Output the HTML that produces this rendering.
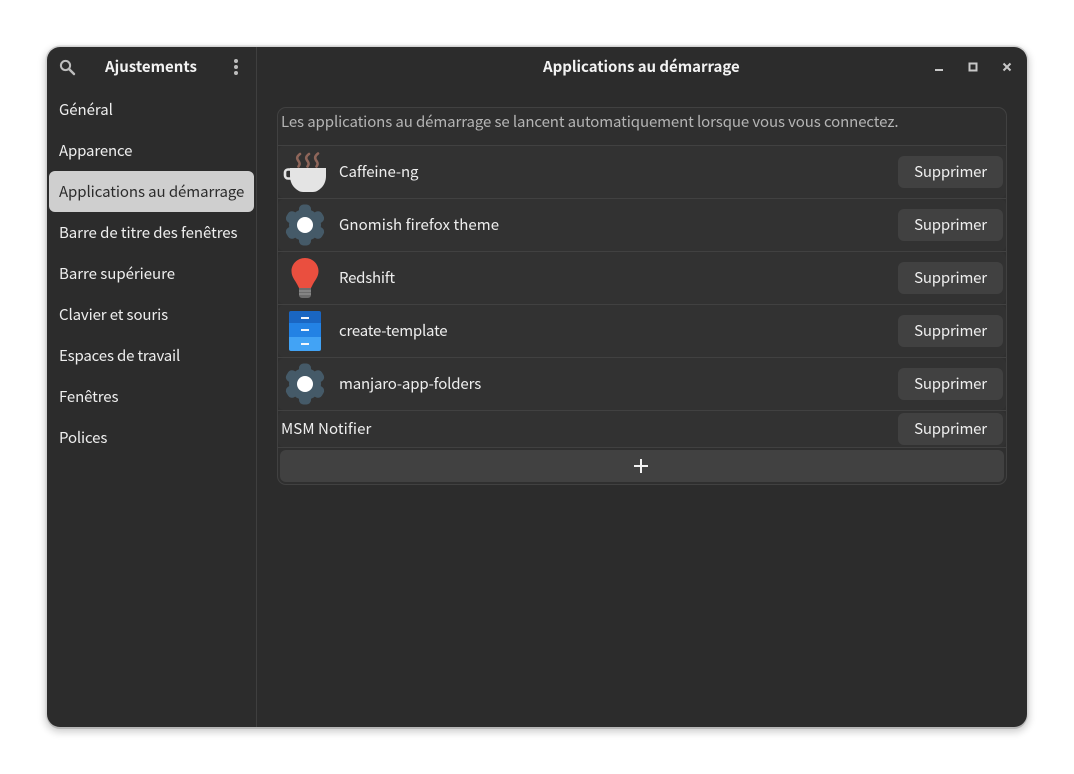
<!DOCTYPE html>
<html><head><meta charset="utf-8">
<style>
*{box-sizing:border-box}
html,body{margin:0;padding:0;width:1074px;height:774px;background:#fff;overflow:hidden;font-family:"Noto Sans CJK SC","Liberation Sans",sans-serif;font-size:15px;color:#eee}
.win{position:absolute;left:47px;top:47px;width:980px;height:680px;background:#2c2c2c;border-radius:13px;box-shadow:0 2px 0 0 #b8b8b8,0 0 0 1.5px #d2d2d2,0 3px 8px 2px rgba(0,0,0,.2)}
.t{position:absolute;white-space:nowrap;line-height:20px}
.abs{position:absolute}
.btn{position:absolute;left:898px;width:105px;height:32px;background:#414141;border-radius:6px;color:#eee;text-align:center;line-height:31px;letter-spacing:-.2px}
.line{position:absolute;left:278px;width:728px;height:1px;background:#414141}
.row{position:absolute;left:278px;width:728px;background:#323232;border-radius:6px}
</style></head><body>
<div class="win"></div>
<div class="abs" style="left:256px;top:47px;width:1px;height:680px;background:#3f3f3f"></div>

<div class="abs" style="left:277px;top:107px;width:730px;height:378px;border:1px solid #414141;border-radius:9px;background:#2f2f2f"></div>
<div class="row" style="top:146px;height:52px"></div>
<div class="row" style="top:199px;height:52px"></div>
<div class="row" style="top:252px;height:52px"></div>
<div class="row" style="top:305px;height:52px"></div>
<div class="row" style="top:358px;height:52px"></div>
<div class="row" style="top:411px;height:36px"></div>
<div class="line" style="top:145px"></div>
<div class="line" style="top:198px"></div>
<div class="line" style="top:251px"></div>
<div class="line" style="top:304px"></div>
<div class="line" style="top:357px"></div>
<div class="line" style="top:410px"></div>
<div class="line" style="top:447px"></div>

<svg class="abs" style="left:59px;top:59px" width="17" height="17" viewBox="0 0 17 17"><circle cx="6.5" cy="6.5" r="4.6" fill="none" stroke="#bdbdbd" stroke-width="2"/><path d="M10 10l5 5" stroke="#bdbdbd" stroke-width="2.4" stroke-linecap="round"/></svg>
<div class="t" style="left:105px;top:57px;font-weight:700;color:#f2f2f2">Ajustements</div>
<svg class="abs" style="left:232px;top:58px" width="8" height="18"><circle cx="4" cy="3" r="2" fill="#bdbdbd"/><circle cx="4" cy="9" r="2" fill="#bdbdbd"/><circle cx="4" cy="15" r="2" fill="#bdbdbd"/></svg>

<div class="abs" style="left:49px;top:171px;width:205px;height:41px;background:#cfcfcf;border-radius:6px"></div>
<div class="t" style="left:59px;top:100px;letter-spacing:-.05px">Général</div>
<div class="t" style="left:59px;top:141px;letter-spacing:-.15px">Apparence</div>
<div class="t" style="left:59px;top:182px;color:#2c2c2c;letter-spacing:-.08px">Applications au démarrage</div>
<div class="t" style="left:59px;top:223px;letter-spacing:-.06px">Barre de titre des fenêtres</div>
<div class="t" style="left:59px;top:264px;letter-spacing:-.03px">Barre supérieure</div>
<div class="t" style="left:59px;top:305px;letter-spacing:-.12px">Clavier et souris</div>
<div class="t" style="left:59px;top:346px;letter-spacing:-.17px">Espaces de travail</div>
<div class="t" style="left:59px;top:387px;letter-spacing:-.12px">Fenêtres</div>
<div class="t" style="left:59px;top:428px;letter-spacing:-.14px">Polices</div>

<div class="t" style="left:543px;top:57px;font-weight:700;color:#f2f2f2;letter-spacing:-.04px">Applications au démarrage</div>
<svg class="abs" style="left:930px;top:58px" width="86" height="18"><rect x="5" y="11" width="8" height="2" fill="#c8c8c8"/><rect x="39.5" y="5.5" width="7" height="7" fill="none" stroke="#c8c8c8" stroke-width="2"/><path d="M73.5 5.5l7 7m0-7l-7 7" stroke="#c8c8c8" stroke-width="2"/></svg>

<div class="t" style="left:281px;top:112px;color:#b4b4b4;letter-spacing:-.105px">Les applications au démarrage se lancent automatiquement lorsque vous vous connectez.</div>

<svg class="abs" style="left:283px;top:150px" width="46" height="44" viewBox="0 0 46 44">
<g fill="none" stroke="#8f665a" stroke-width="2.6" stroke-linecap="round"><path d="M17 4c-4 3-3 5-1.500 7s1.500 3.500 0 5.500"/><path d="M26 4c-4 3-3 5-1.500 7s1.500 3.500 0 5.500"/><path d="M35 3.500c-4 3-3 5.500-1.500 7.500s1.500 3.500 0 5.500"/></g>
<path d="M7 18h36v8c0 5-2 10-6 13-2 1.600-4 3-7 3H20c-3 0-5-1.400-7-3-4-3-6-8-6-13z" fill="#e4e4e4"/>
<path d="M8 19.500H5a3 3 0 0 0-3 3v3a3 3 0 0 0 3 3h3" fill="none" stroke="#e4e4e4" stroke-width="2.600"/>
</svg>
<div class="t" style="left:339px;top:162px;letter-spacing:-.1px">Caffeine-ng</div>
<div class="btn" style="top:156px">Supprimer</div>

<svg class="abs" style="left:284px;top:204px" width="42" height="42" viewBox="-21 -21 42 42">
<g fill="#455a68"><circle r="16"/>
<rect x="-6" y="-20.500" width="12" height="12" rx="4.500"/><rect x="-6" y="-20.500" width="12" height="12" rx="4.500" transform="rotate(60)"/><rect x="-6" y="-20.500" width="12" height="12" rx="4.500" transform="rotate(120)"/><rect x="-6" y="-20.500" width="12" height="12" rx="4.500" transform="rotate(180)"/><rect x="-6" y="-20.500" width="12" height="12" rx="4.500" transform="rotate(240)"/><rect x="-6" y="-20.500" width="12" height="12" rx="4.500" transform="rotate(300)"/></g>
<circle r="8" fill="#fff"/></svg>
<div class="t" style="left:339px;top:215px;letter-spacing:.07px">Gnomish firefox theme</div>
<div class="btn" style="top:209px">Supprimer</div>

<svg class="abs" style="left:288px;top:256px" width="34" height="44" viewBox="0 0 34 44">
<path d="M17 2C9.500 2 3.500 8 3.500 15c0 6 3.500 9 6 14 .6 1.300 1 2 1.500 3h12c.5-1 .9-1.700 1.500-3 2.500-5 6-8 6-14C30.500 8 24.500 2 17 2z" fill="#ea4f3f"/>
<path d="M11 32h12v7c0 1.500-1.500 3-3 3h-6c-1.500 0-3-1.500-3-3z" fill="#6d6d6d"/>
<path d="M11 35h12M11 38h12" stroke="#9a9a9a" stroke-width="1"/>
</svg>
<div class="t" style="left:339px;top:268px;letter-spacing:-.25px">Redshift</div>
<div class="btn" style="top:262px">Supprimer</div>

<svg class="abs" style="left:289px;top:311px" width="32" height="40" viewBox="0 0 32 40">
<path d="M2 0h28a2 2 0 0 1 2 2v11H0V2a2 2 0 0 1 2-2z" fill="#1a66c2"/>
<rect y="12" width="32" height="14" fill="#2382e4"/>
<path d="M0 26h32v12a2 2 0 0 1-2 2H2a2 2 0 0 1-2-2z" fill="#42a3f5"/>
<rect x="12" y="6" width="8" height="2" fill="#f2f6fb"/><rect x="12" y="18" width="8" height="2" fill="#f2f6fb"/><rect x="12" y="32" width="8" height="2" fill="#f2f6fb"/>
</svg>
<div class="t" style="left:339px;top:321px;letter-spacing:-.2px">create-template</div>
<div class="btn" style="top:315px">Supprimer</div>

<svg class="abs" style="left:284px;top:363px" width="42" height="42" viewBox="-21 -21 42 42">
<g fill="#455a68"><circle r="16"/>
<rect x="-6" y="-20.500" width="12" height="12" rx="4.500"/><rect x="-6" y="-20.500" width="12" height="12" rx="4.500" transform="rotate(60)"/><rect x="-6" y="-20.500" width="12" height="12" rx="4.500" transform="rotate(120)"/><rect x="-6" y="-20.500" width="12" height="12" rx="4.500" transform="rotate(180)"/><rect x="-6" y="-20.500" width="12" height="12" rx="4.500" transform="rotate(240)"/><rect x="-6" y="-20.500" width="12" height="12" rx="4.500" transform="rotate(300)"/></g>
<circle r="8" fill="#fff"/></svg>
<div class="t" style="left:339px;top:374px;letter-spacing:-.15px">manjaro-app-folders</div>
<div class="btn" style="top:368px">Supprimer</div>

<div class="t" style="left:281px;top:419px;letter-spacing:.1px">MSM Notifier</div>
<div class="btn" style="top:413px">Supprimer</div>

<div class="abs" style="left:280px;top:450px;width:724px;height:32px;background:#414141;border-radius:6px"></div>
<svg class="abs" style="left:633px;top:458px" width="16" height="16"><path d="M1 8h14M8 1v14" stroke="#f2f2f2" stroke-width="2"/></svg>
</body></html>
